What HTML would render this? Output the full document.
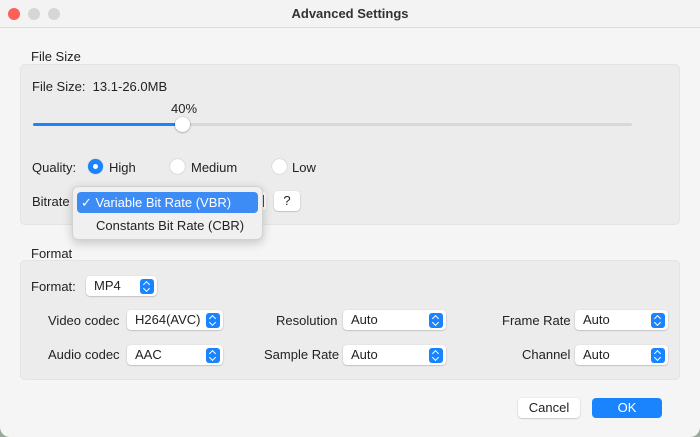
<!DOCTYPE html>
<html><head><style>
*{margin:0;padding:0;box-sizing:border-box}
body{width:700px;height:437px;background:#9aa89c;font-family:"Liberation Sans",sans-serif;font-size:13px;color:#222;position:relative;overflow:hidden}
.win{position:absolute;left:0;top:0;width:700px;height:437px;background:#f5f5f5;border-radius:0 0 10px 10px;overflow:hidden}
.title{position:absolute;left:0;top:0;width:700px;height:28px;background:#f3f3f3;border-bottom:1px solid #dcdcdc;text-align:center;font-weight:bold;line-height:28px;font-size:13px;color:#333}
.dot{position:absolute;top:8px;width:12px;height:12px;border-radius:50%;background:#d6d6d6}
.t{position:absolute;white-space:nowrap}
.box{position:absolute;left:20px;width:660px;background:#ececec;border:1px solid #e4e4e4;border-radius:5px}
.sel{position:absolute;height:20px;background:#fff;border-radius:4px;box-shadow:0 0.5px 1.5px rgba(0,0,0,.3);padding-left:8px;line-height:20px}
.sel i{position:absolute;right:3px;top:3px;width:14px;height:15px;background:#1a84ff;border-radius:3px}
.sel i:before{content:"";position:absolute;left:4px;top:3px;width:4px;height:4px;border-left:1.5px solid #fff;border-top:1.5px solid #fff;transform:rotate(45deg)}
.sel i:after{content:"";position:absolute;left:4px;top:7px;width:4px;height:4px;border-right:1.5px solid #fff;border-bottom:1.5px solid #fff;transform:rotate(45deg)}
.radio{position:absolute;width:15px;height:15px;border-radius:50%;background:#fff;box-shadow:0 0 1px rgba(0,0,0,.4)}
.btn{position:absolute;height:20px;border-radius:4px;text-align:center;line-height:20px;background:#fff;box-shadow:0 0.5px 1.5px rgba(0,0,0,.3)}
</style></head><body>
<div class="win">
<div class="title">Advanced Settings</div>
<div class="dot" style="left:8px;background:#fe5f57"></div>
<div class="dot" style="left:28px"></div>
<div class="dot" style="left:48px"></div>

<div class="t" style="left:31px;top:49px">File Size</div>
<div class="box" style="top:64px;height:161px"></div>
<div class="t" style="left:32px;top:79px">File Size:&nbsp;&nbsp;13.1-26.0MB</div>
<div class="t" style="left:171px;top:101px">40%</div>
<div style="position:absolute;left:33px;top:123px;width:599px;height:3px;background:#d8d8d8;border-radius:2px"></div>
<div style="position:absolute;left:33px;top:123px;width:150px;height:3px;background:#1a84ff;border-radius:2px"></div>
<div style="position:absolute;left:175px;top:117px;width:15px;height:15px;border-radius:50%;background:#fff;box-shadow:0 0.5px 2px rgba(0,0,0,.4)"></div>

<div class="t" style="left:32px;top:160px">Quality:</div>
<div class="radio" style="left:88px;top:159px;background:#1a84ff"><div style="position:absolute;left:5px;top:5px;width:5px;height:5px;border-radius:50%;background:#fff"></div></div>
<div class="t" style="left:109px;top:160px">High</div>
<div class="radio" style="left:170px;top:159px"></div>
<div class="t" style="left:191px;top:160px">Medium</div>
<div class="radio" style="left:272px;top:159px"></div>
<div class="t" style="left:292px;top:160px">Low</div>

<div class="t" style="left:32px;top:194px">Bitrate</div>
<div style="position:absolute;left:258px;top:192px;width:8px;height:18px;background:#fff;border-radius:3px"><div style="position:absolute;left:4px;top:3px;width:2px;height:12px;background:#1a4fb0"></div></div>
<div class="btn" style="left:274px;top:191px;width:26px">?</div>
<div style="position:absolute;left:72px;top:186px;width:191px;height:54px;background:#f0f0f0;border:1px solid #d2d2d2;border-radius:6px;box-shadow:0 3px 10px rgba(0,0,0,.2)"></div>
<div style="position:absolute;left:77px;top:192px;width:181px;height:21px;background:#3d8cf5;border-radius:4px"></div>
<div class="t" style="left:81px;top:195px;color:#fff">✓ Variable Bit Rate (VBR)</div>
<div class="t" style="left:96px;top:218px">Constants Bit Rate (CBR)</div>

<div class="t" style="left:31px;top:246px">Format</div>
<div class="box" style="top:260px;height:120px"></div>
<div class="t" style="left:31px;top:279px">Format:</div>
<div class="sel" style="left:86px;top:276px;width:71px">MP4<i></i></div>

<div class="t" style="left:48px;top:313px">Video codec</div>
<div class="sel" style="left:127px;top:310px;width:96px">H264(AVC)<i></i></div>
<div class="t" style="left:48px;top:347px">Audio codec</div>
<div class="sel" style="left:127px;top:345px;width:96px">AAC<i></i></div>

<div class="t" style="left:276px;top:313px">Resolution</div>
<div class="sel" style="left:343px;top:310px;width:103px;padding-left:8px">Auto<i></i></div>
<div class="t" style="left:264px;top:347px">Sample Rate</div>
<div class="sel" style="left:343px;top:345px;width:103px">Auto<i></i></div>

<div class="t" style="left:502px;top:313px">Frame Rate</div>
<div class="sel" style="left:575px;top:310px;width:93px">Auto<i></i></div>
<div class="t" style="left:522px;top:347px">Channel</div>
<div class="sel" style="left:575px;top:345px;width:93px">Auto<i></i></div>

<div class="btn" style="left:518px;top:398px;width:62px">Cancel</div>
<div class="btn" style="left:592px;top:398px;width:70px;background:#1a84ff;color:#fff;box-shadow:none">OK</div>
</div>
</body></html>
